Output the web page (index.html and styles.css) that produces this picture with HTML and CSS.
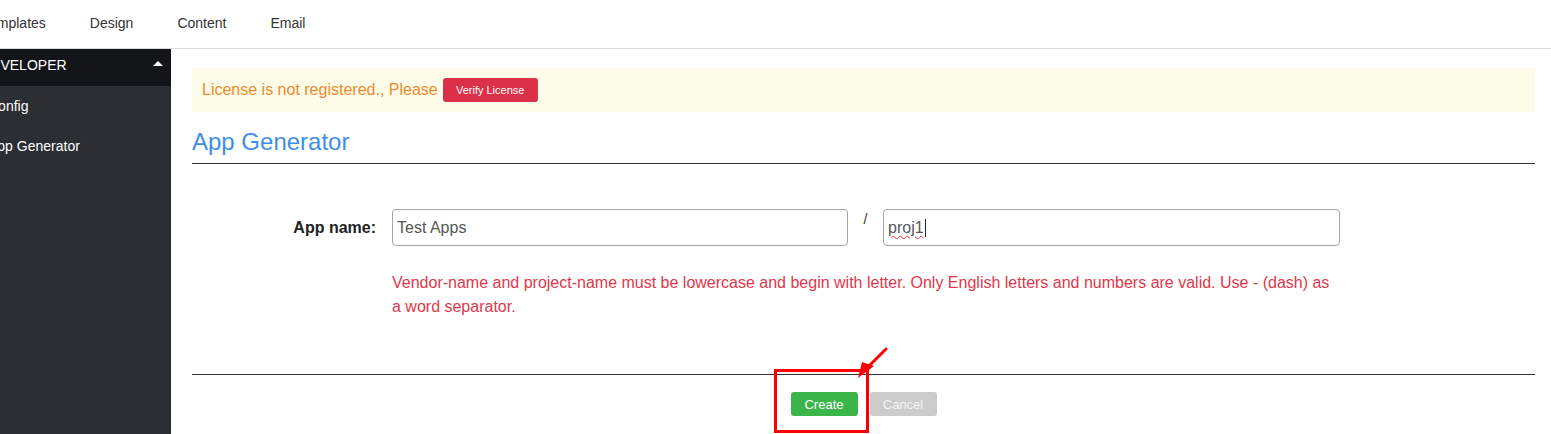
FILE: index.html
```html
<!DOCTYPE html>
<html lang="en">
<head>
<meta charset="utf-8">
<title>App Generator</title>
<link rel="stylesheet" href="styles.css">
</head>
<body>
<header class="topnav">
  <ul class="topnav-list">
    <li class="topnav-item">Templates</li>
    <li class="topnav-item">Design</li>
    <li class="topnav-item">Content</li>
    <li class="topnav-item">Email</li>
  </ul>
</header>
<div class="layout">
  <aside class="sidebar">
    <div class="sidebar-inner">
      <div class="sidebar-head">
        <span class="sidebar-title">DEVELOPER</span>
        <span class="caret-up"></span>
      </div>
      <ul class="sidebar-menu">
        <li class="sidebar-link">Config</li>
        <li class="sidebar-link">App Generator</li>
      </ul>
    </div>
  </aside>
  <main class="content">
    <div class="alert">
      <span class="alert-text">License is not registered., Please</span>
      <button class="btn btn-verify" type="button">Verify License</button>
    </div>
    <h1 class="page-title">App Generator</h1>
    <form class="gen-form">
      <div class="form-grid">
        <label class="form-label">App name:</label>
        <div class="field"><span class="field-text">Test Apps</span></div>
        <div class="slash">/</div>
        <div class="field"><span class="field-text spell">proj1</span><span class="caret"></span></div>
        <p class="form-error">Vendor-name and project-name must be lowercase and begin with letter. Only English letters and numbers are valid. Use - (dash) as a word separator.</p>
      </div>
      <hr class="form-rule">
      <div class="form-actions">
        <button class="btn btn-create" type="button">Create</button>
        <button class="btn btn-cancel" type="button">Cancel</button>
        <span class="annot-box"></span>
        <svg class="annot-arrow" width="40" height="40" viewBox="0 0 40 40">
          <line x1="34" y1="3" x2="14" y2="23" stroke="#ff0000" stroke-width="3" stroke-linecap="round"/>
          <polygon points="6,32 10,16 22,20" fill="#ff0000"/>
        </svg>
      </div>
    </form>
  </main>
</div>
</body>
</html>
```
FILE: styles.css
```css
* { box-sizing: border-box; }
html, body { margin: 0; padding: 0; }
body {
  font-family: "Liberation Sans", Arial, sans-serif;
  font-size: 14px;
  color: #333;
  background: #fff;
  height: 434px;
  overflow: hidden;
}
.topnav {
  height: 49px;
  border-bottom: 1px solid #dcdcdc;
  overflow: hidden;
}
.topnav-list {
  list-style: none;
  margin: 0 0 0 -40px;
  padding: 0;
  display: flex;
}
.topnav-item {
  padding: 0 22px;
  line-height: 46px;
  font-size: 14px;
  color: #333;
  white-space: nowrap;
}
.layout {
  display: flex;
  height: 385px;
}
.sidebar {
  width: 171px;
  flex: 0 0 171px;
  background: #2b2e33;
  overflow: hidden;
}
.sidebar-inner { margin-left: -40px; }
.sidebar-head {
  height: 37px;
  background: #141518;
  display: flex;
  align-items: center;
  justify-content: space-between;
  padding: 0 8px 6px 21px;
  color: #fff;
  font-size: 14px;
}
.caret-up {
  width: 0; height: 0;
  border-left: 5px solid transparent;
  border-right: 5px solid transparent;
  border-bottom: 5px solid #fff;
  margin-bottom: 2px;
}
.sidebar-menu {
  list-style: none;
  margin: 0;
  padding: 0;
}
.sidebar-link {
  color: #fff;
  font-size: 14px;
  line-height: 40px;
  padding-left: 28px;
  white-space: nowrap;
}
.content {
  flex: 1;
  padding: 19px 16px 0 21px;
  min-width: 0;
}
.alert {
  height: 44px;
  background: #fdfce9;
  display: flex;
  align-items: center;
  padding: 0 10px;
  gap: 5px;
}
.alert-text {
  color: #ef8a2c;
  font-size: 16px;
}
.btn {
  font-family: "Liberation Sans", Arial, sans-serif;
  border: 0;
  border-radius: 3px;
  color: #fff;
  cursor: pointer;
}
.btn-verify {
  background: #dc3048;
  font-size: 11px;
  height: 24px;
  width: 95px;
  padding: 0;
}
.page-title {
  margin: 15px 0 0;
  font-size: 24px;
  line-height: 29px;
  font-weight: normal;
  color: #3d8fe6;
  padding-bottom: 7px;
  border-bottom: 1px solid #333;
}
.gen-form { margin: 0; }
.form-grid {
  display: grid;
  grid-template-columns: 200px 456px 35px 457px;
  margin-top: 45px;
  align-items: start;
}
.form-label {
  font-weight: bold;
  font-size: 16px;
  color: #222;
  text-align: right;
  padding-right: 16px;
  line-height: 37px;
}
.field {
  height: 37px;
  border: 1px solid #a5a5a5;
  border-radius: 4px;
  display: flex;
  align-items: center;
  padding-left: 4px;
  font-size: 16px;
  color: #555;
}
.spell {
  text-decoration: underline wavy #e33;
  text-decoration-thickness: 1px;
  text-underline-offset: 2px;
}
.caret {
  width: 1px;
  height: 18px;
  background: #222;
  margin-left: 1px;
}
.slash {
  text-align: center;
  font-size: 14px;
  padding-top: 2px;
  color: #333;
}
.form-error {
  grid-column: 2 / 5;
  margin: 25px 0 0;
  font-size: 16px;
  line-height: 24px;
  color: #e0374a;
}
.form-rule {
  margin: 55px 0 17px;
  border: 0;
  border-top: 1px solid #333;
  height: 0;
}
.form-actions {
  position: relative;
  display: flex;
  justify-content: center;
  gap: 12px;
}
.btn-create, .btn-cancel {
  width: 67px;
  height: 24px;
  font-size: 13px;
}
.btn-create { background: #3bb54a; }
.btn-cancel { background: #cccccc; color: #f4f4f4; }
.annot-box {
  position: absolute;
  left: 582px;
  top: -23px;
  width: 95px;
  height: 64px;
  border: 3px solid #ff0000;
}
.annot-arrow {
  position: absolute;
  left: 660px;
  top: -46px;
}
```
